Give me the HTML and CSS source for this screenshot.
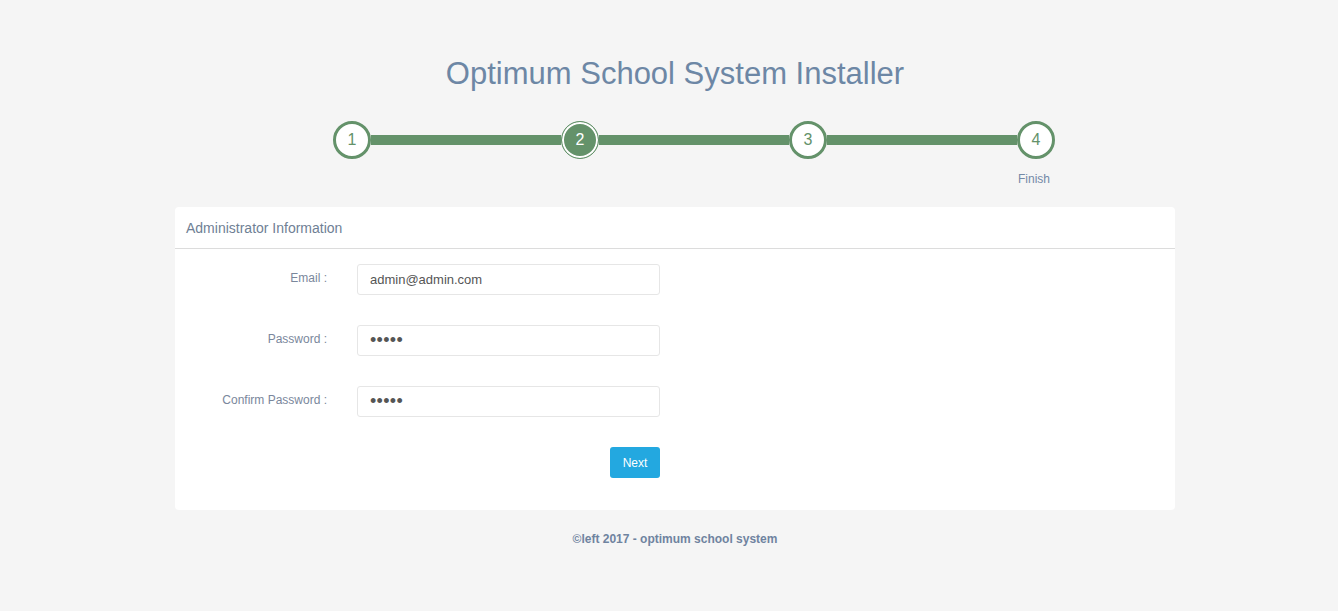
FILE: index.html
```html
<!DOCTYPE html>
<html>
<head>
<meta charset="utf-8">
<title>Optimum School System Installer</title>
<link rel="stylesheet" href="styles.css">
</head>
<body>
<div class="page">
  <h1 class="title">Optimum School System Installer</h1>
  <div class="stepper">
    <div class="step"><span class="circle">1</span></div>
    <div class="bar"></div>
    <div class="step"><span class="circle active">2</span></div>
    <div class="bar"></div>
    <div class="step"><span class="circle">3</span></div>
    <div class="bar"></div>
    <div class="step"><span class="circle">4</span><span class="step-label">Finish</span></div>
  </div>
  <div class="panel">
    <div class="panel-heading">Administrator Information</div>
    <form class="panel-body">
      <div class="row">
        <label class="label">Email :</label>
        <input class="input" type="text" value="admin@admin.com">
      </div>
      <div class="row">
        <label class="label">Password :</label>
        <input class="input pw" type="password" value="admin">
      </div>
      <div class="row">
        <label class="label">Confirm Password :</label>
        <input class="input pw" type="password" value="admin">
      </div>
      <div class="row actions">
        <button type="button" class="btn">Next</button>
      </div>
    </form>
  </div>
  <footer class="footer">&copy;left 2017 - optimum school system</footer>
</div>
</body>
</html>
```
FILE: styles.css
```css
* { box-sizing: border-box; }
html, body { margin: 0; padding: 0; }
body {
  background: #f5f5f5;
  font-family: "Liberation Sans", Arial, sans-serif;
  font-size: 14px;
  color: #6f7f95;
  padding-left: 12px;
}
.page {
  width: 1000px;
  margin: 0 auto;
}
.title {
  margin: 57px 0 0;
  text-align: center;
  font-weight: normal;
  font-size: 31px;
  line-height: 33px;
  color: #6d87a5;
}
.stepper {
  display: flex;
  align-items: center;
  margin: 31px 0 0 158px;
  width: 722px;
  height: 38px;
}
.step {
  position: relative;
  width: 38px;
  height: 38px;
  flex: none;
}
.circle {
  display: flex;
  align-items: center;
  justify-content: center;
  width: 38px;
  height: 38px;
  border: 3px solid #64926a;
  border-radius: 50%;
  background: #fff;
  color: #64926a;
  font-size: 16px;
}
.circle.active {
  background: #64926a;
  color: #fff;
  border: 1px solid #64926a;
  box-shadow: inset 0 0 0 2px #fff;
}
.bar {
  flex: 1;
  height: 10px;
  background: #64926a;
}
.step-label {
  position: absolute;
  top: 51px;
  left: 50%;
  transform: translateX(-50%);
  font-size: 12px;
  color: #7389a7;
  margin-left: -2px;
}
.panel {
  margin-top: 48px;
  background: #fff;
  border-radius: 4px;
}
.panel-heading {
  padding: 11px 11px 10px;
  line-height: 20px;
  border-bottom: 1px solid #dcdcdc;
  font-size: 14px;
  color: #6f7f95;
}
.panel-body {
  padding: 15px 0 32px;
  margin: 0;
}
.row {
  display: grid;
  grid-template-columns: 152px 303px;
  column-gap: 30px;
  align-items: start;
  margin-bottom: 30px;
}
.row:last-child { margin-bottom: 0; }
.label {
  text-align: right;
  font-size: 12px;
  color: #7a879c;
  padding-top: 7px;
  line-height: 14px;
}
.input {
  width: 303px;
  height: 31px;
  border: 1px solid #e6e6e6;
  border-radius: 3px;
  padding: 0 12px;
  font-family: "Liberation Sans", Arial, sans-serif;
  font-size: 13px;
  color: #555;
  background: #fff;
  outline: none;
}
.input.pw {
  font-size: 18px;
  letter-spacing: 0.3px;
}
.actions {
  grid-template-columns: 152px 303px;
}
.btn {
  grid-column: 2;
  justify-self: end;
  width: 50px;
  height: 31px;
  border: none;
  border-radius: 3px;
  background: #23a8e0;
  color: #fff;
  font-family: "Liberation Sans", Arial, sans-serif;
  font-size: 12px;
  padding: 0;
}
.footer {
  margin-top: 22px;
  text-align: center;
  font-size: 12px;
  font-weight: bold;
  color: #6f83a0;
}
```
